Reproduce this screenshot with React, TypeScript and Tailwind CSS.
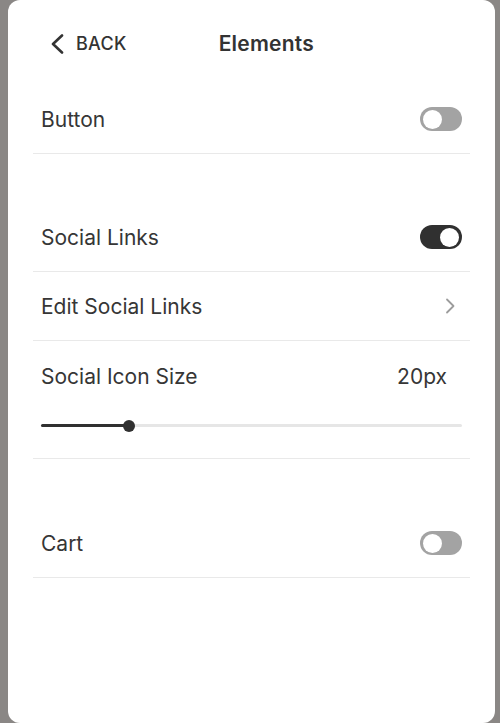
import React from "react";

const Toggle = ({ on }: { on: boolean }) => (
  <div
    className={
      on
        ? "flex h-[24px] w-[42px] items-center justify-end rounded-full bg-[#303030] px-[3px]"
        : "flex h-[24px] w-[42px] items-center justify-start rounded-full bg-[#a3a3a3] px-[3px]"
    }
  >
    <div className="h-[19px] w-[19px] rounded-full bg-white" />
  </div>
);

const Row = ({ label, children }: { label: string; children?: React.ReactNode }) => (
  <div className="flex h-[69px] items-center justify-between border-b border-[#e9e9e9] px-[8px]">
    <span className="pt-[1px] text-[21px] text-[#363636]">{label}</span>
    {children}
  </div>
);

export default function App() {
  return (
    <div
      className="h-[723px] w-[500px] bg-[#8a8785] pl-[8px] pr-[5px]"
      style={{ fontFamily: "Inter, 'Noto Sans', sans-serif" }}
    >
      <div className="h-full rounded-[12px] bg-white px-[25px]">
        <header className="flex h-[85px] items-center pt-[2px]">
          <button type="button" className="ml-[17px] flex items-center gap-[12px] text-[#333]">
            <svg width="14" height="20" viewBox="0 0 14 20" fill="none">
              <polyline points="12,1.5 3,10 12,18.5" stroke="#333" strokeWidth="2.6" strokeLinecap="round" strokeLinejoin="round" />
            </svg>
            <span className="text-[18px] font-medium tracking-[0.3px]">BACK</span>
          </button>
          <h1 className="ml-[92px] text-[21px] font-semibold tracking-[0.2px] text-[#333]">Elements</h1>
        </header>

        <Row label="Button">
          <Toggle on={false} />
        </Row>

        <div className="h-[49px]" />

        <Row label="Social Links">
          <Toggle on />
        </Row>
        <Row label="Edit Social Links">
          <svg width="12" height="16" viewBox="0 0 12 16" fill="none" className="mr-[6px]">
            <polyline points="3,1.5 9.5,8 3,14.5" stroke="#9c9c9c" strokeWidth="1.8" strokeLinecap="round" strokeLinejoin="round" />
          </svg>
        </Row>

        <div className="border-b border-[#e9e9e9] px-[8px]">
          <div className="flex h-[70px] items-center justify-between pt-[1px]">
            <span className="text-[21px] text-[#363636]">Social Icon Size</span>
            <span className="pr-[15px] text-[21px] text-[#363636]">20px</span>
          </div>
          <div className="relative mb-[26px] mt-[9px] h-[12px]">
            <div className="absolute left-0 right-0 top-[4px] h-[3px] rounded-full bg-[#e6e6e6]" />
            <div className="absolute left-0 top-[4px] h-[3px] w-[88px] rounded-full bg-[#303030]" />
            <div className="absolute left-[82px] top-0 h-[12px] w-[12px] rounded-full bg-[#303030]" />
          </div>
        </div>

        <div className="h-[50px]" />

        <Row label="Cart">
          <Toggle on={false} />
        </Row>
      </div>
    </div>
  );
}
